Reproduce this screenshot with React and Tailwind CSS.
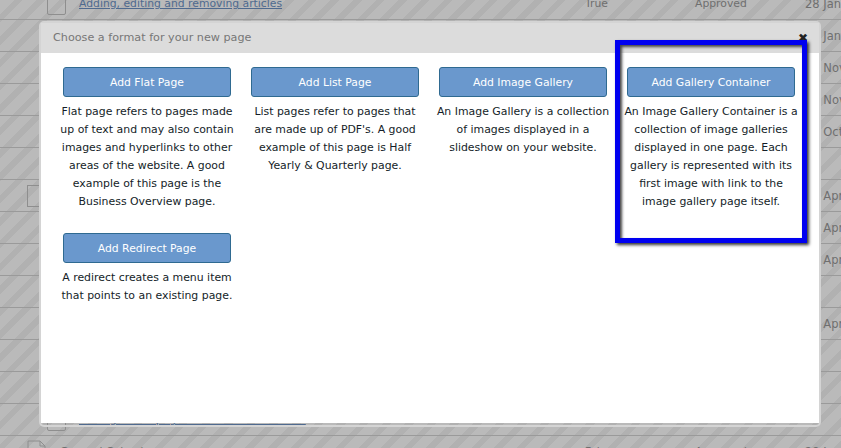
import React from "react";

const font = "font-['DejaVu_Sans',sans-serif]";

const rows = [
  { icon: "box", title: "Adding, editing and removing articles", link: true, col1: "True", col2: "Approved", date: "28 Jan" },
  { date: "28 Jan" },
  { date: "28 Nov" },
  { date: "28 Nov" },
  { date: "28 Oct" },
  { date: "" },
  { icon: "left", date: "28 Apr" },
  { date: "28 Apr" },
  { date: "28 Apr" },
  { date: "" },
  { date: "28 Apr" },
  { date: "" },
  { date: "" },
  { icon: "box", title: "Adding a new page to the website section", link: true, date: "" },
  { icon: "doc", title: "General Calendar", doc: true, col1: "False", col2: "Approved", date: "28 Jan" },
];

const formats = [
  {
    title: "Add Flat Page",
    lines: ["Flat page refers to pages made", "up of text and may also contain", "images and hyperlinks to other", "areas of the website. A good", "example of this page is the", "Business Overview page."],
  },
  {
    title: "Add List Page",
    lines: ["List pages refer to pages that", "are made up of PDF's. A good", "example of this page is Half", "Yearly & Quarterly page."],
  },
  {
    title: "Add Image Gallery",
    lines: ["An Image Gallery is a collection", "of images displayed in a", "slideshow on your website."],
  },
  {
    title: "Add Gallery Container",
    lines: ["An Image Gallery Container is a", "collection of image galleries", "displayed in one page. Each", "gallery is represented with its", "first image with link to the", "image gallery page itself."],
  },
  {
    title: "Add Redirect Page",
    lines: ["A redirect creates a menu item", "that points to an existing page."],
  },
];

const App = () => {
  return (
    <div className={`relative h-[448px] w-[841px] overflow-hidden bg-[repeating-linear-gradient(135deg,#bababa_0px,#bababa_10px,#b1b1b1_10px,#b1b1b1_16px)] ${font}`}>
      {/* table behind the overlay */}
      <div className="-mt-[12px] flex flex-col text-[10.8px] text-[#6f6f6f]">
        {rows.map((row, i) => (
          <div key={i} className="flex h-[32px] items-center border-b border-[#9a9a9a]">
            <div className="flex w-[79px] shrink-0 pl-[27px]">
              {row.icon === "box" && <div className="ml-[20px] h-[22px] w-[19px] rounded-[2px] border border-[#8e8e8e]"></div>}
              {row.icon === "left" && <div className="h-[22px] w-[19px] border border-[#8e8e8e]"></div>}
              {row.icon === "doc" && (
                <svg width="19" height="24" viewBox="0 0 19 24" fill="none" stroke="#8e8e8e">
                  <path d="M1 1h12l5 5v17H1zM13 1v5h5" />
                </svg>
              )}
            </div>
            <div className={`w-[506px] shrink-0 whitespace-nowrap pt-[2px] ${row.link ? "text-[#4f6a8f] underline" : ""} ${row.doc ? "-ml-[19px] w-[525px]" : ""}`}>
              {row.title}
            </div>
            <div className="w-[110px] shrink-0 pt-[2px]">{row.col1}</div>
            <div className="w-[110px] shrink-0 pt-[2px]">{row.col2}</div>
            <div className="whitespace-nowrap pt-[2px] text-[11.5px]">{row.date}</div>
          </div>
        ))}
      </div>

      {/* modal */}
      <div className="absolute left-[39px] top-[21px] h-[406px] w-[782px] rounded-[5px] border-2 border-[#d4d4d4]">
        <div className="h-[400px] bg-white">
          <div className="flex h-[30px] items-center bg-[#dcdcdc] pl-[12px] pt-[1px] text-[11.2px] text-[#777]">
            Choose a format for your new page
          </div>
          <div className="grid grid-cols-[188px_188px_188px_188px] gap-y-[22px] pl-[18px] pt-[14px]">
            {formats.map((f) => (
              <div key={f.title} className="flex w-[176px] flex-col items-center">
                <button className="h-[30px] w-[168px] rounded-[3px] border border-[#2f6a91] bg-[#6a98cd] pt-[3px] text-[10.8px] text-white">
                  {f.title}
                </button>
                <div className="mt-[6px] text-center text-[10.9px] leading-[18px] text-[#141d28]">
                  {f.lines.map((line) => (
                    <div key={line} className="whitespace-nowrap">{line}</div>
                  ))}
                </div>
              </div>
            ))}
          </div>
        </div>
      </div>

      {/* close */}
      <div className="absolute left-[798px] top-[32px] text-[12px] font-bold leading-none text-[#222]">✖</div>

      {/* blue annotation */}
      <div className="absolute left-[615px] top-[40px] h-[203px] w-[192px] border-[5px] border-[#0000f0] shadow-[2px_2px_3px_#333,inset_2px_2px_3px_#444]"></div>
    </div>
  );
};

export default App;
